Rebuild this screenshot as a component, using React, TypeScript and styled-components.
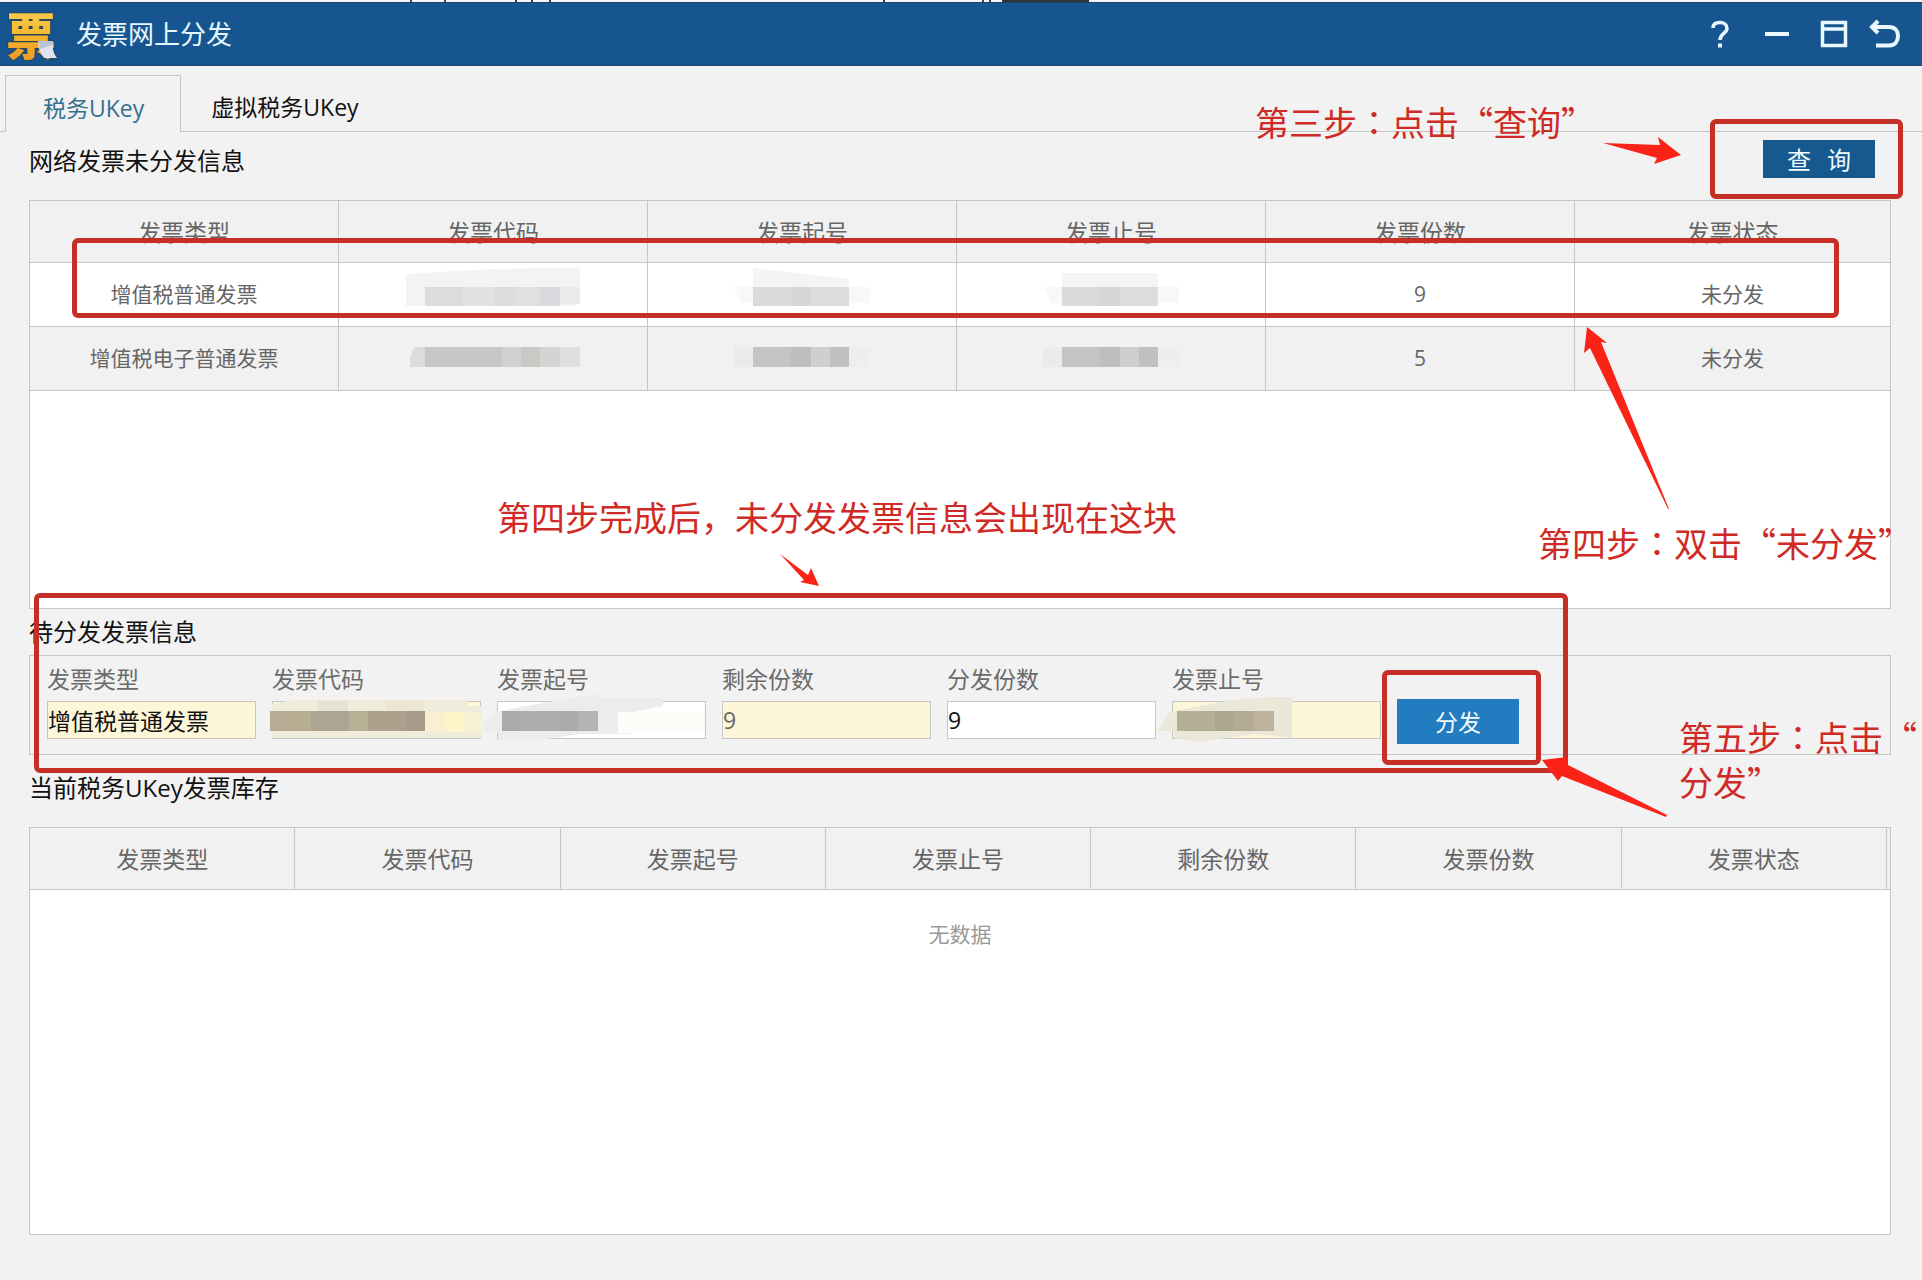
import React from 'react';
import styled, { createGlobalStyle, css } from 'styled-components';

const GlobalStyle = createGlobalStyle`
  * { box-sizing: border-box; }
  body {
    margin: 0;
    background: #f2f2f2;
    color: #1a1a1a;
    font-family: "Open Sans", "Noto Sans CJK SC", sans-serif;
    font-size: 24px;
  }
  button, input { font-family: inherit; }
`;

const line = '#c6c6c6';
const red = '#c62f26';

const Page = styled.div`
  position: relative;
  display: flex;
  flex-direction: column;
  min-height: 100vh;
`;

const DesktopEdge = styled.div`
  height: 2px;
  overflow: hidden;
  background: #f4f4f4;
  svg { display: block; }
`;

const TitleBar = styled.header`
  display: flex;
  align-items: center;
  height: 64px;
  padding: 0 25px 0 6px;
  background: #16558f;
  border-top: 1px solid #1f4468;
  border-bottom: 1px solid #24486c;
`;

const Logo = styled.span`
  position: relative;
  display: block;
  width: 52px;
  height: 52px;
  font: 900 50px/50px "Noto Sans CJK SC", sans-serif;
  color: transparent;
  background: linear-gradient(#f8cf52, #f3b52c 55%, #f09a2a);
  background-clip: text;
  -webkit-background-clip: text;
  filter: drop-shadow(0 0 1px #3a3420);
  svg { position: absolute; right: 1px; bottom: 1px; }
`;

const AppName = styled.h1`
  flex: 1;
  margin: 0 0 0 18px;
  font-size: 26px;
  line-height: 40px;
  font-weight: 400;
  color: #e6f6ff;
`;

const WindowTools = styled.div`
  display: flex;
  gap: 21px;
`;

const ToolButton = styled.button<{ $narrow?: boolean }>`
  display: flex;
  align-items: center;
  justify-content: center;
  width: ${p => (p.$narrow ? 24 : 36)}px;
  height: 36px;
  padding: 0;
  border: 0;
  background: none;
  color: #eaf8ff;
  svg { flex: none; }
`;

const Tabs = styled.nav`
  display: flex;
  height: 66px;
  padding: 9px 0 0 5px;
  background: linear-gradient(${line}, ${line}) bottom / 100% 1px no-repeat;
`;

const Tab = styled.button<{ $active?: boolean }>`
  padding: 8px 29px 2px;
  border: 1px solid transparent;
  border-bottom: 0;
  background: none;
  font-size: 23px;
  line-height: 32px;
  color: #111;
  ${p => p.$active && css`
    padding: 10px 36px 2px 37px;
    border-color: ${line};
    background: #f2f2f2;
    color: #34708f;
  `}
`;

const Content = styled.main`
  flex: 1;
  display: flex;
  flex-direction: column;
  padding: 0 31px 45px 29px;
`;

const QueryBar = styled.div`
  display: flex;
  justify-content: space-between;
  align-items: center;
  padding: 8px 16px 22px 0;
  h2 { padding-top: 4px; }
`;

const SectionTitle = styled.h2`
  margin: 0;
  font-size: 24px;
  line-height: 32px;
  font-weight: 400;
  color: #111;
`;

const TitleRow = styled.div<{ $height: number }>`
  display: flex;
  align-items: flex-start;
  height: ${p => p.$height}px;
  padding-top: ${p => (p.$height > 50 ? 17 : 7)}px;
`;

const ActionButton = styled.button<{ $primary?: boolean }>`
  width: ${p => (p.$primary ? 122 : 112)}px;
  height: ${p => (p.$primary ? 45 : 38)}px;
  padding: 0 0 1px;
  border: 0;
  background: ${p => (p.$primary ? '#237bc0' : '#15598f')};
  color: #f2fbff;
  font-family: "Noto Sans CJK SC", sans-serif;
  font-size: ${p => (p.$primary ? 23 : 24)}px;
  line-height: 32px;
`;

const Panel = styled.section<{ $fill?: boolean }>`
  ${p => (p.$fill ? 'flex: 1;' : 'height: 409px;')}
  border: 1px solid ${line};
  background: #fff;
`;

const GridTable = styled.table`
  width: 100%;
  table-layout: fixed;
  border-collapse: separate;
  border-spacing: 0;
  color: #666;
`;

const HeadCell = styled.th`
  height: 62px;
  padding: 0;
  border-bottom: 1px solid ${line};
  border-right: 1px solid ${line};
  background: #f1f1f1;
  font-size: 23px;
  line-height: 32px;
  font-weight: 400;
`;

const BodyRow = styled.tr<{ $shaded?: boolean }>`
  background: ${p => (p.$shaded ? '#f1f1f1' : '#fff')};
`;

const Cell = styled.td`
  height: 64px;
  padding: 0 0 2px;
  border-bottom: 1px solid ${line};
  border-right: 1px solid ${line};
  text-align: center;
  font-size: 21px;
  line-height: 32px;
  svg { display: block; margin: 0 auto; }
`;

const MainTable = styled(GridTable)`
  th, td { width: 309px; }
  th:last-child, td:last-child { width: auto; border-right: 0; }
`;

const StockHead = styled.div`
  padding-right: 3px;
  background: linear-gradient(${line}, ${line}) bottom / 100% 1px no-repeat #f1f1f1;
`;

const Empty = styled.p`
  margin: 0;
  padding-top: 28px;
  text-align: center;
  font-size: 21px;
  line-height: 32px;
  color: #999;
`;

const FormPanel = styled.form`
  display: flex;
  align-items: flex-end;
  gap: 16px;
  height: 100px;
  padding: 0 0 10px 17px;
  border: 1px solid ${line};
`;

const Field = styled.div`
  position: relative;
  width: 209px;
  margin-bottom: 5px;
`;

const FieldLabel = styled.label`
  display: block;
  margin-bottom: 6px;
  font-size: 23px;
  line-height: 32px;
  color: #6b6b6b;
`;

const FieldInput = styled.input<{ $tint?: boolean; $muted?: boolean }>`
  display: block;
  width: 100%;
  height: 38px;
  padding: 0;
  border: 1px solid ${line};
  border-radius: 0;
  outline: 0;
  background: ${p => (p.$tint ? '#fef6d8' : '#fff')};
  color: ${p => (p.$muted ? '#666' : '#111')};
  font-size: 23px;
`;

const FieldMosaic = styled.svg`
  position: absolute;
  left: -16px;
  bottom: -5px;
`;

/* Tutorial marks drawn over the window */
const Frame = styled.div`
  position: absolute;
  border: 5px solid ${red};
  border-radius: 6px;
  pointer-events: none;
`;
const QueryFrame = styled(Frame)`top: 119px; right: 19px; width: 193px; height: 80px;`;
const RowFrame = styled(Frame)`top: 238px; left: 72px; right: 83px; height: 80px;`;
const FormFrame = styled(Frame)`top: 593px; left: 34px; width: 1534px; height: 180px;`;
const SendFrame = styled(Frame)`top: 670px; left: 1382px; width: 159px; height: 95px;`;

const Note = styled.p`
  position: absolute;
  margin: 0;
  font: 400 34px/45px "Noto Sans CJK SC", sans-serif;
  color: #cf2a25;
`;
const NoteThree = styled(Note)`top: 99px; left: 1255px;`;
const NoteFour = styled(Note)`top: 520px; left: 1538px; white-space: nowrap;`;
const NoteBlock = styled(Note)`top: 494px; left: 497px;`;
const NoteFive = styled(Note)`top: 714px; left: 1679px; width: 240px;`;
const CenteredMark = styled.span`font-family: "Noto Sans CJK TC", sans-serif;`;
const Colon = () => <CenteredMark lang="zh-TW">：</CenteredMark>;

const Arrows = styled.svg`
  position: absolute;
  top: 0;
  left: 0;
  pointer-events: none;
`;

type Block = [x: number, y: number, w: number, h: number, fill: string];

const Blocks = ({ items }: { items: Block[] }) => (
  <>{items.map(([x, y, w, h, fill], i) => <rect key={i} x={x} y={y} width={w} height={h} fill={fill} />)}</>
);

const CodeMosaic = ({ dark }: { dark?: boolean }) => (
  <svg width="174" height={dark ? 40 : 54} aria-hidden="true">
    {dark ? (
      <>
        <path d="M8 9H20V29H4V19Z" fill="#dcdcdc" />
        <Blocks items={[[19, 9, 77, 20, '#c6c7c7'], [96, 9, 19, 20, '#d0d1d0'], [115, 9, 19, 20, '#c9c9c5'], [134, 9, 20, 20, '#d3d5d5'], [154, 9, 20, 20, '#dedfdf']]} />
      </>
    ) : (
      <>
        <path d="M0 7L85 2L174 1V36L168 39H0Z" fill="#f3f3f3" />
        <Blocks items={[[19, 20, 38, 19, '#dcdcdd'], [57, 20, 30, 19, '#e2e2e2'], [87, 20, 22, 19, '#dddddd'], [109, 20, 25, 19, '#e0e0e2'], [134, 20, 20, 19, '#d9dade'], [154, 20, 20, 17, '#ebebeb']]} />
      </>
    )}
  </svg>
);

const NumberMosaic = ({ dark, flat }: { dark?: boolean; flat?: boolean }) => (
  <svg width="136" height={dark ? 40 : 54} aria-hidden="true">
    {dark ? (
      <Blocks items={[[0, 9, 19, 20, '#ebebeb'], [19, 9, 38, 20, '#c3c4c3'], [57, 9, 20, 20, '#bdbebe'], [77, 9, 19, 20, '#cfcfcf'], [96, 9, 19, 20, '#bfc1c1'], [115, 9, 21, 20, '#edeeee']]} />
    ) : (
      <>
        <path d={flat ? 'M19 6H115V20H19Z' : 'M19 1L115 12V20H19Z'} fill="#f4f4f4" />
        <path d="M0 20H136V36H8Z" fill="#f8f8f8" />
        <Blocks items={[[19, 20, 38, 19, '#dadadb'], [57, 20, 20, 19, '#d6d6d8'], [77, 20, 38, 19, '#dcdcdd']]} />
      </>
    )}
  </svg>
);

const InputMosaic = ({ kind }: { kind: 'code' | 'start' | 'end' }) => (
  <FieldMosaic width="226" height="50" aria-hidden="true">
    {kind === 'code' && (
      <>
        <path d="M16 10L36 6H212V12H226V44H16Z" fill="#f0ecdc" />
        <Blocks items={[[62, 7, 30, 11, '#e6e2d3'], [130, 7, 38, 11, '#eae6d2'], [168, 18, 58, 20, '#f8f0d3'], [188, 18, 20, 20, '#fff3c9'], [14, 17, 22, 20, '#b9ac96'], [36, 17, 19, 20, '#b8ae91'], [55, 17, 38, 20, '#aea492'], [93, 17, 19, 20, '#b8b095'], [112, 17, 38, 20, '#ada18d'], [150, 17, 19, 20, '#a69b8a']]} />
      </>
    )}
    {kind === 'start' && (
      <>
        <path d="M2 30L14 18L78 6L118 0V4H182V12L152 18V40H98L60 46H18L16 37H2Z" fill="#ececec" />
        <Blocks items={[[137, 18, 87, 21, '#fcfcf9'], [21, 17, 19, 20, '#a9aaab'], [40, 17, 38, 20, '#afaead'], [78, 17, 19, 20, '#a9abad'], [97, 17, 20, 20, '#b3b4b4']]} />
      </>
    )}
    {kind === 'end' && (
      <>
        <path d="M2 36L14 18L76 6L118 3H136V44L100 40L40 48L18 44V37H2Z" fill="#ebe7d9" />
        <Blocks items={[[21, 17, 38, 20, '#b6af98'], [59, 17, 19, 20, '#aca58f'], [78, 17, 20, 20, '#b3ab94'], [98, 17, 20, 20, '#bdb39c']]} />
      </>
    )}
  </FieldMosaic>
);

const edgeMarks: Block[] = [
  [410, 0, 2, 2, '#444'], [444, 0, 2, 2, '#444'], [515, 0, 2, 2, '#444'], [531, 0, 2, 2, '#444'],
  [549, 0, 2, 2, '#444'], [883, 0, 2, 2, '#444'], [982, 0, 2, 2, '#444'], [989, 0, 2, 2, '#444'],
  [1002, 0, 87, 2, '#2f3437'],
];

const mainHeads = ['发票类型', '发票代码', '发票起号', '发票止号', '发票份数', '发票状态'];
const stockHeads = ['发票类型', '发票代码', '发票起号', '发票止号', '剩余份数', '发票份数', '发票状态'];
const rows = [
  { type: '增值税普通发票', count: 9, state: '未分发', shaded: false },
  { type: '增值税电子普通发票', count: 5, state: '未分发', shaded: true },
];

interface FieldSpec {
  id: string;
  label: string;
  value: string;
  tint?: boolean;
  muted?: boolean;
  mosaic?: 'code' | 'start' | 'end';
}
const fields: FieldSpec[] = [
  { id: 'type', label: '发票类型', value: '增值税普通发票', tint: true },
  { id: 'code', label: '发票代码', value: '', tint: true, mosaic: 'code' },
  { id: 'start', label: '发票起号', value: '', mosaic: 'start' },
  { id: 'left', label: '剩余份数', value: '9', tint: true, muted: true },
  { id: 'send', label: '分发份数', value: '9' },
  { id: 'end', label: '发票止号', value: '', tint: true, mosaic: 'end' },
];

export default function App() {
  return (
    <Page lang="zh-CN">
      <GlobalStyle />
      <DesktopEdge>
        <svg width="1100" height="2" aria-hidden="true"><Blocks items={edgeMarks} /></svg>
      </DesktopEdge>
      <TitleBar>
        <Logo>
          票
          <svg width="20" height="19" viewBox="0 0 20 19" aria-hidden="true">
            <path d="M1 1H16C15 7 16 13 20 18H7C3 13 1 7 1 1Z" fill="#dfe5f0" />
            <path d="M1 1H16L15 5L3 9Z" fill="#b9c3d6" />
          </svg>
        </Logo>
        <AppName>发票网上分发</AppName>
        <WindowTools>
          <ToolButton aria-label="帮助">
            <svg width="20" height="28" viewBox="0 0 20 28" fill="none" stroke="currentColor" strokeWidth="3.500">
              <path d="M3 8C3 4 6 2.500 10 2.500S17 5 17 8.500C17 13 10 13.500 10 20" />
              <path d="M10 23.500V27.500" strokeWidth="4" />
            </svg>
          </ToolButton>
          <ToolButton aria-label="最小化">
            <svg width="24" height="4"><rect width="24" height="4" fill="currentColor" /></svg>
          </ToolButton>
          <ToolButton aria-label="最大化">
            <svg width="28" height="28" viewBox="0 0 28 28" fill="none" stroke="currentColor" strokeWidth="3.500">
              <path d="M2.500 2.500H25.500V25.500H2.500ZM2.500 9H25.500" />
            </svg>
          </ToolButton>
          <ToolButton $narrow aria-label="返回">
            <svg width="32" height="30" viewBox="0 0 32 30" fill="none" stroke="currentColor" strokeWidth="4">
              <path d="M9 2L3 8L9 14M3 8H20C26 8 29 12 29 17S26 26.500 20 26.500H7" />
            </svg>
          </ToolButton>
        </WindowTools>
      </TitleBar>
      <Tabs>
        <Tab $active>税务UKey</Tab>
        <Tab>虚拟税务UKey</Tab>
      </Tabs>
      <Content>
        <QueryBar>
          <SectionTitle>网络发票未分发信息</SectionTitle>
          <ActionButton>查{'\u00a0\u00a0\u00a0'}询</ActionButton>
        </QueryBar>
        <Panel>
          <MainTable>
            <thead>
              <tr>{mainHeads.map(h => <HeadCell key={h}>{h}</HeadCell>)}</tr>
            </thead>
            <tbody>
              {rows.map(r => (
                <BodyRow key={r.type} $shaded={r.shaded}>
                  <Cell>{r.type}</Cell>
                  <Cell><CodeMosaic dark={r.shaded} /></Cell>
                  <Cell><NumberMosaic dark={r.shaded} /></Cell>
                  <Cell><NumberMosaic dark={r.shaded} flat /></Cell>
                  <Cell>{r.count}</Cell>
                  <Cell>{r.state}</Cell>
                </BodyRow>
              ))}
            </tbody>
          </MainTable>
        </Panel>
        <TitleRow $height={46}><SectionTitle>待分发发票信息</SectionTitle></TitleRow>
        <FormPanel onSubmit={e => e.preventDefault()}>
          {fields.map(f => (
            <Field key={f.id}>
              <FieldLabel htmlFor={f.id}>{f.label}</FieldLabel>
              <FieldInput id={f.id} defaultValue={f.value} $tint={f.tint} $muted={f.muted} />
              {f.mosaic && <InputMosaic kind={f.mosaic} />}
            </Field>
          ))}
          <ActionButton $primary>分发</ActionButton>
        </FormPanel>
        <TitleRow $height={72}><SectionTitle>当前税务UKey发票库存</SectionTitle></TitleRow>
        <Panel $fill>
          <StockHead>
            <GridTable>
              <thead>
                <tr>{stockHeads.map(h => <HeadCell key={h}>{h}</HeadCell>)}</tr>
              </thead>
            </GridTable>
          </StockHead>
          <Empty>无数据</Empty>
        </Panel>
      </Content>

      <QueryFrame />
      <RowFrame />
      <FormFrame />
      <SendFrame />
      <NoteThree>第三步<Colon />点击“查询”</NoteThree>
      <NoteFour>第四步<Colon />双击“未分发”</NoteFour>
      <NoteBlock>第四步完成后，未分发发票信息会出现在这块</NoteBlock>
      <NoteFive>第五步<Colon />点击“<br />分发”</NoteFive>
      <Arrows width="1900" height="900" fill="#fb2318" aria-hidden="true">
        <path d="M1603 143L1660 145L1658 137L1681 155L1654 164L1657 158Z" />
        <path d="M1587 327L1607 343L1601 342L1669 509L1668 509L1590 348L1584 353Z" />
        <path d="M780 554L808 575L811 568L819 586L800 582L804 580Z" />
        <path d="M1542 760L1567 757L1568 765L1667 815L1666 817L1562 776L1558 781Z" />
      </Arrows>
    </Page>
  );
}
